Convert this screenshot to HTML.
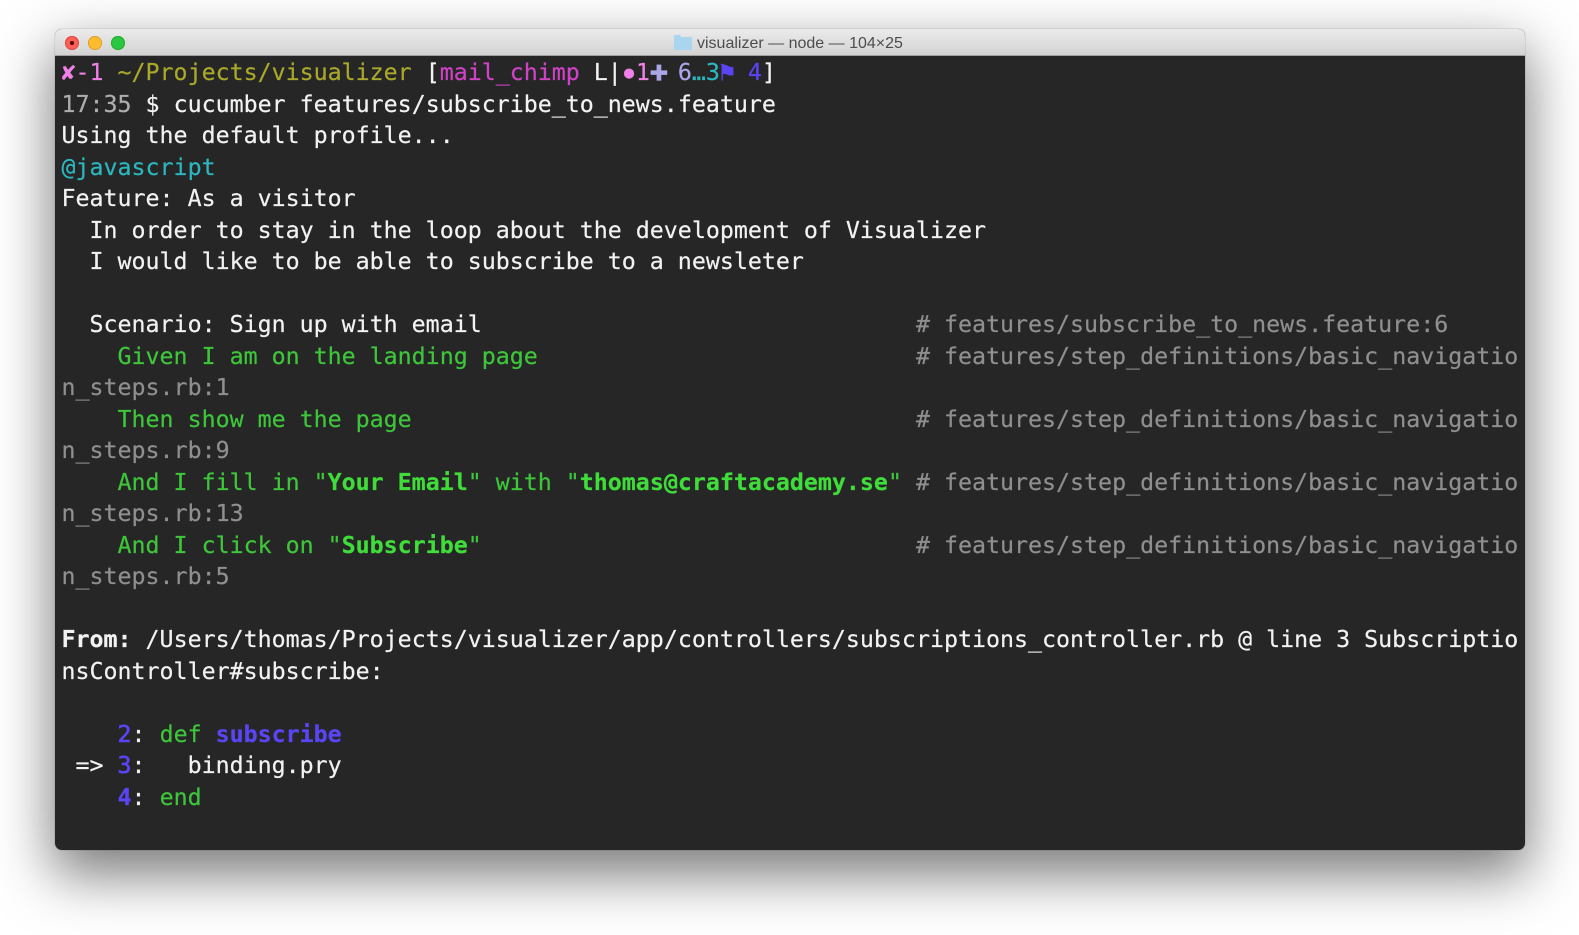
<!DOCTYPE html>
<html>
<head>
<meta charset="utf-8">
<style>
html,body{margin:0;padding:0;width:1579px;height:935px;overflow:hidden;background:#fff}
#win{position:absolute;left:55px;top:29px;width:1470px;height:821px;border-radius:7px;box-shadow:0 22px 56px 3px rgba(0,0,0,.52),0 0 0 1px rgba(0,0,0,.07);background:#262626}
#bar{position:absolute;left:0;top:0;width:100%;height:27px;border-radius:7px 7px 0 0;background:linear-gradient(#ebebeb,#d3d3d3);border-bottom:1px solid #a0a0a0;box-sizing:border-box}
.dot{position:absolute;top:6.5px;width:14px;height:14px;border-radius:50%}
#title{position:absolute;left:642px;top:0;font:16px/29px "Liberation Sans",sans-serif;color:#4d4d4d;white-space:pre}
#folder{position:absolute;left:619px;top:6px}
#term{position:absolute;left:61.5px;top:57.4px;margin:0;font-family:"DejaVu Sans Mono","Liberation Mono",monospace;font-size:23.27px;line-height:31.5px;color:#f2f2f2;white-space:pre;-webkit-text-stroke:.2px currentColor;filter:blur(.3px)}
b{font-weight:bold}
.g{color:#3ec63a}.gb{color:#3fdc3a;font-weight:bold}.c{color:#8f8f8f}.p{color:#f080e8}.y{color:#a9a82a}.m{color:#cf42c6}
.t{color:#2cb6bd}.v{color:#5a45f5}.l{color:#aaa6e8}.w{color:#adadad}
.n{-webkit-text-stroke:.6px #5a45f5}
.x{display:inline-block;width:1ch;text-align:center;line-height:1}
</style>
</head>
<body>
<div id="win">
<div id="bar">
<div class="dot" style="left:10px;background:#fc5f57;box-shadow:inset 0 0 0 1px #df4744"></div>
<div style="position:absolute;left:15px;top:11.500px;width:4px;height:4px;border-radius:50%;background:#4a0a08"></div>
<div class="dot" style="left:33px;background:#fdbd2e;box-shadow:inset 0 0 0 1px #de9f34"></div>
<div class="dot" style="left:56px;background:#29c73f;box-shadow:inset 0 0 0 1px #27aa35"></div>
<svg id="folder" width="18" height="15" viewBox="0 0 18 15"><path d="M0 1q0-1 1-1h5l1.500 2H17q1 0 1 1v11q0 1-1 1H1q-1 0-1-1z" fill="#a9d6ee"/></svg>
<div id="title">visualizer — node — 104×25</div>
</div>
</div>
<pre id="term"><span class="x p"><b>✘</b></span><span class="p">-1</span> <span class="y">~/Projects/visualizer</span> [<span class="m">mail_chimp</span> L|<span class="x p" style="transform:scale(.72)">●</span><span class="p">1</span><span class="x l" style="transform:translate(2px,-2px) scale(1.35)"><b>✚</b></span> <span class="l">6</span><span class="t">…3</span><span class="x v" style="transform:scale(1.1)">⚑</span> <span class="v">4</span>]
<span class="w">17:35</span> $ cucumber features/subscribe_to_news.feature
Using the default profile...
<span class="t">@javascript</span>
Feature: As a visitor
  In order to stay in the loop about the development of Visualizer
  I would like to be able to subscribe to a newsleter

  Scenario: Sign up with email                               <span class="c"># features/subscribe_to_news.feature:6</span>
<span class="g">    Given I am on the landing page</span>                           <span class="c"># features/step_definitions/basic_navigatio</span>
<span class="c">n_steps.rb:1</span>
<span class="g">    Then show me the page</span>                                    <span class="c"># features/step_definitions/basic_navigatio</span>
<span class="c">n_steps.rb:9</span>
<span class="g">    And I fill in "</span><span class="gb">Your Email</span><span class="g">" with "</span><span class="gb">thomas@craftacademy.se</span><span class="g">"</span> <span class="c"># features/step_definitions/basic_navigatio</span>
<span class="c">n_steps.rb:13</span>
<span class="g">    And I click on "</span><span class="gb">Subscribe</span><span class="g">"</span>                               <span class="c"># features/step_definitions/basic_navigatio</span>
<span class="c">n_steps.rb:5</span>

<b>From:</b> /Users/thomas/Projects/visualizer/app/controllers/subscriptions_controller.rb @ line 3 Subscriptio
nsController#subscribe:

    <span class="v n">2</span>: <span class="g">def</span> <b class="v">subscribe</b>
 =&gt; <span class="v n">3</span>:   binding.pry
    <b class="v">4</b>: <span class="g">end</span></pre>
</body>
</html>
